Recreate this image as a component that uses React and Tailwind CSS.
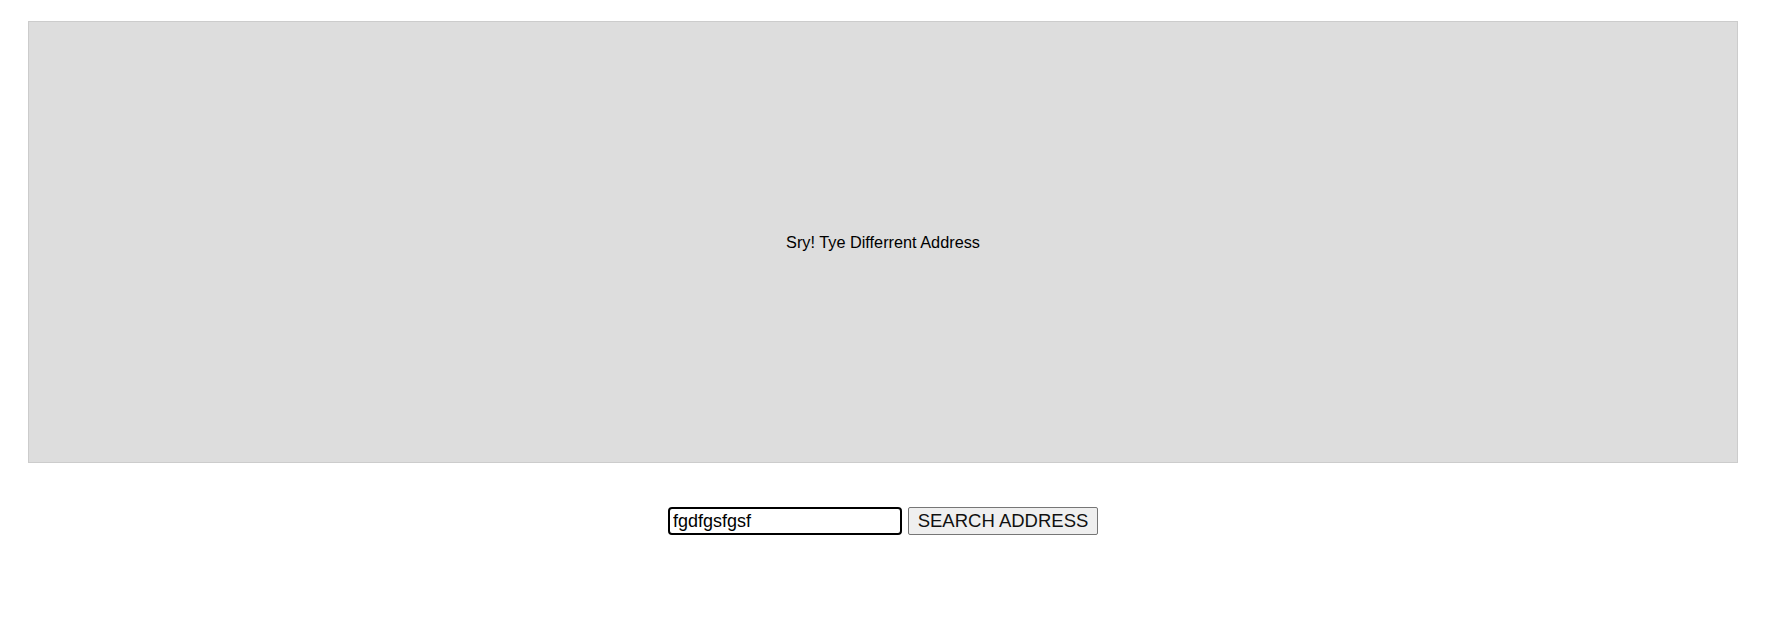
import React, { useState } from 'react';

export default function App() {
  const [address, setAddress] = useState('fgdfgsfgsf');

  return (
    <div className="min-h-screen bg-white font-['Liberation_Sans',Arial,sans-serif]">
      {/* MAP AREA */}
      <div className="pt-[21px] pl-[28px]">
        <div className="w-[1710px] h-[442px] bg-[#dddddd] border border-[#cccccc] flex items-center justify-center">
          <p className="text-[16.3px] text-black mt-[1px]">Sry! Tye Differrent Address</p>
        </div>
      </div>

      {/* SEARCH */}
      <div className="mt-[44px] flex justify-center">
        <div className="flex items-center gap-[6px] ml-[-11px]">
          <input
            type="text"
            value={address}
            onChange={(e) => setAddress(e.target.value)}
            className="w-[234px] h-[28px] border-[2.5px] border-black rounded-[4px] px-[3px] text-[18px] text-black outline-none"
          />
          <button className="h-[28px] w-[190px] bg-[#efefef] border border-[#767676] rounded-[2px] text-[18.5px] text-[#111] leading-none">
            SEARCH ADDRESS
          </button>
        </div>
      </div>
    </div>
  );
}
